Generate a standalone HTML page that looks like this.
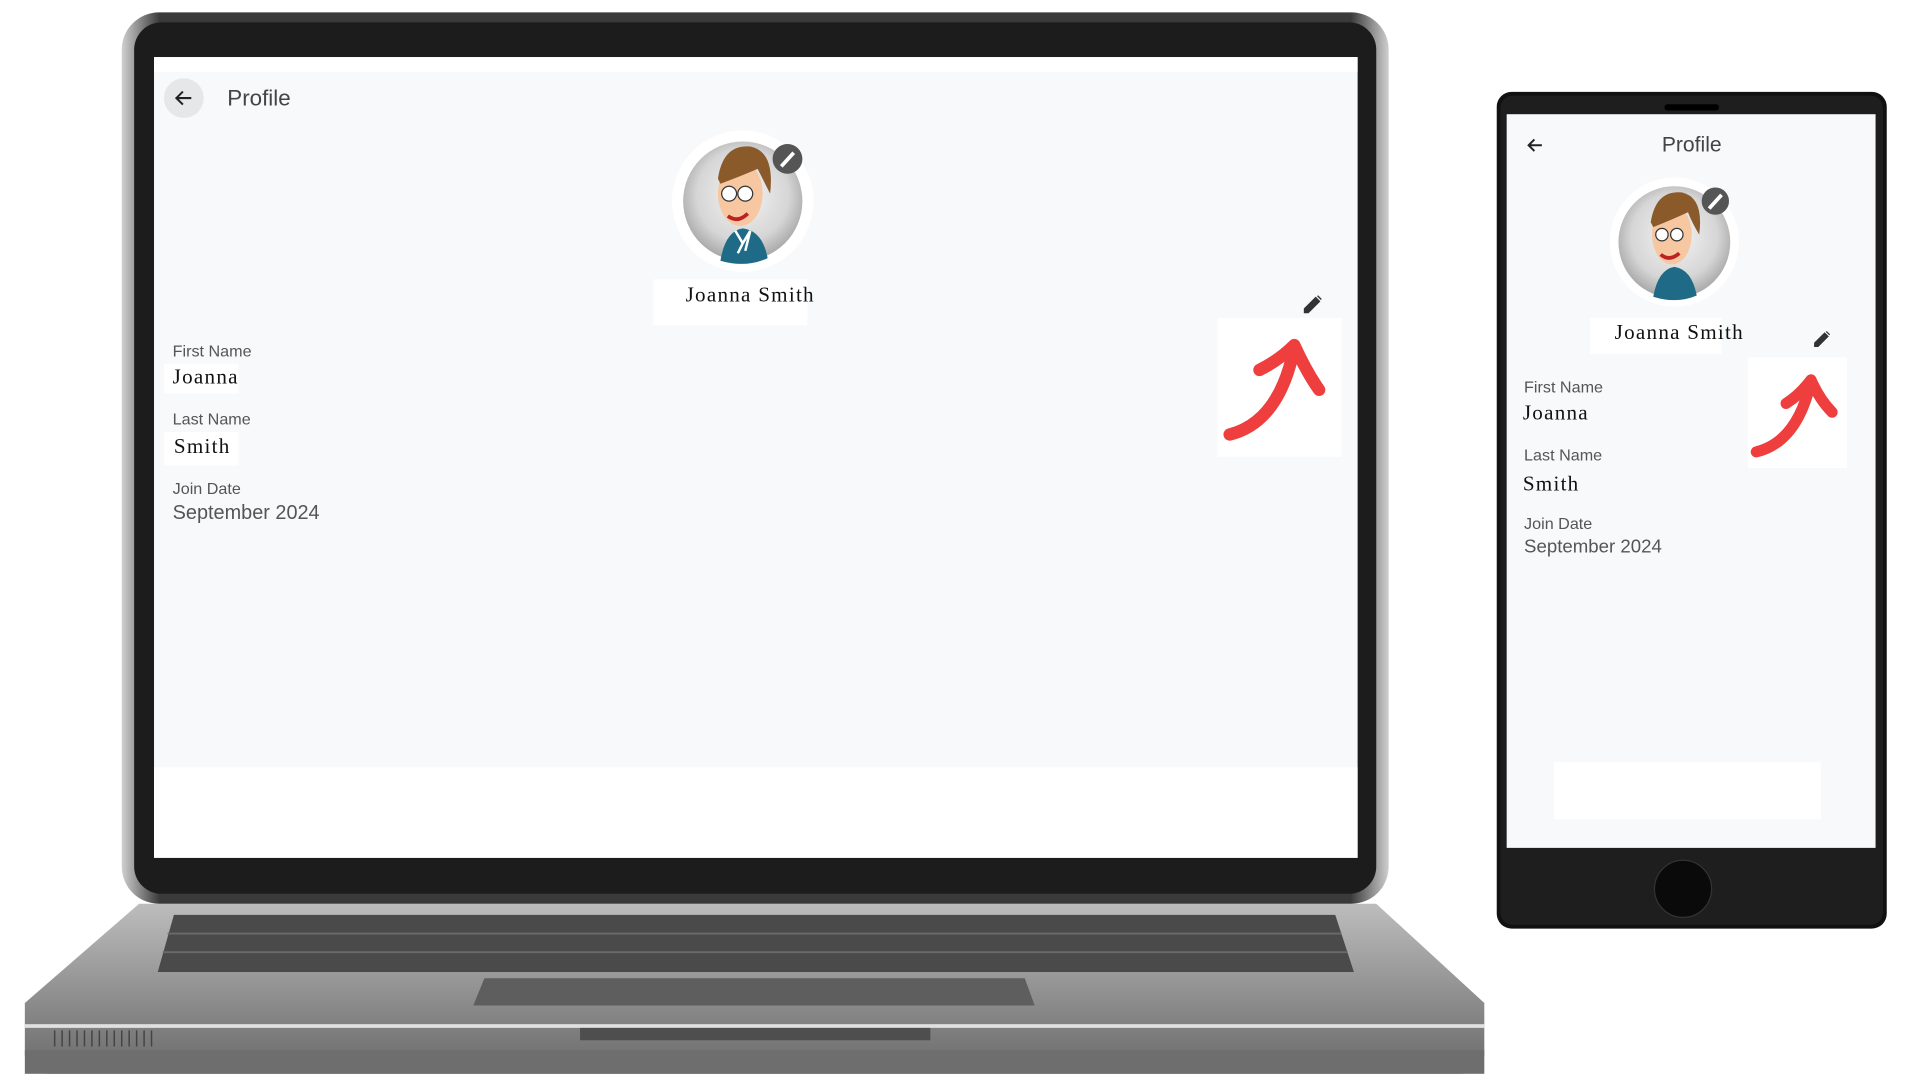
<!DOCTYPE html>
<html><head><meta charset="utf-8"><style>
html,body{margin:0;padding:0;background:#fff;overflow:hidden}
body{width:1919px;height:1080px;position:relative}
#w{position:absolute;left:0;top:0;width:1545px;height:870px;transform:scale(1.2421,1.2414);transform-origin:0 0}
.a{position:absolute}
.sans{font-family:"Liberation Sans",sans-serif}
.ser{font-family:"Liberation Serif",serif;color:#111}
.lbl{font-family:"Liberation Sans",sans-serif;font-size:13px;color:#555}
</style></head><body><div id="w">
<!-- laptop base -->
<svg class="a" style="left:0;top:0" width="1545" height="870">
<defs>
<linearGradient id="bg" x1="0" y1="0" x2="0" y2="1"><stop offset="0" stop-color="#bdbdbd"/><stop offset=".6" stop-color="#8a8a8a"/><stop offset="1" stop-color="#6a6a6a"/></linearGradient>
<linearGradient id="lid" x1="0" y1="0" x2="1" y2="0"><stop offset="0" stop-color="#d0d0d0"/><stop offset=".03" stop-color="#3a3a3a"/><stop offset=".97" stop-color="#3a3a3a"/><stop offset="1" stop-color="#cfcfcf"/></linearGradient>
<radialGradient id="av" cx=".5" cy=".45" r=".55"><stop offset="0" stop-color="#f4f4f4"/><stop offset=".7" stop-color="#d6d6d6"/><stop offset="1" stop-color="#a8a8a8"/></radialGradient>
</defs>
<path d="M112 728 L1108 728 L1195 808 L1195 850 Q1190 865 1175 865 L40 865 Q22 865 20 850 L20 808 Z" fill="url(#bg)"/>
<rect x="20" y="825" width="1175" height="3" fill="#e0e0e0"/>
<rect x="20" y="846" width="1175" height="19" fill="#6e6e6e"/>
<path d="M140 737 L1075 737 L1090 783 L127 783 Z" fill="#4a4a4a"/>
<g stroke="#6a6a6a" stroke-width="1.5">
<line x1="135" y1="752" x2="1080" y2="752"/><line x1="131" y1="767" x2="1085" y2="767"/>
</g>
<path d="M390 788 L825 788 L833 810 L381 810 Z" fill="#5e5e5e"/>
<rect x="467" y="828" width="282" height="10" fill="#4e4e4e"/>
<g stroke="#444" stroke-width="1.2">
<line x1="44" y1="830" x2="44" y2="843"/><line x1="50" y1="830" x2="50" y2="843"/><line x1="56" y1="830" x2="56" y2="843"/><line x1="62" y1="830" x2="62" y2="843"/><line x1="68" y1="830" x2="68" y2="843"/><line x1="74" y1="830" x2="74" y2="843"/><line x1="80" y1="830" x2="80" y2="843"/><line x1="86" y1="830" x2="86" y2="843"/><line x1="92" y1="830" x2="92" y2="843"/><line x1="98" y1="830" x2="98" y2="843"/><line x1="104" y1="830" x2="104" y2="843"/><line x1="110" y1="830" x2="110" y2="843"/><line x1="116" y1="830" x2="116" y2="843"/><line x1="122" y1="830" x2="122" y2="843"/>
</g>
<!-- lid -->
<rect x="98" y="10" width="1020" height="718" rx="30" fill="url(#lid)"/>
<rect x="108" y="18" width="1000" height="702" rx="22" fill="#1c1c1c"/>
<!-- phone -->
<rect x="1205" y="74" width="314" height="674" rx="12" fill="#111"/>
<rect x="1208" y="77" width="308" height="668" rx="10" fill="#1e1e1e"/>
<rect x="1340" y="84" width="44" height="5" rx="2.5" fill="#000"/>
<circle cx="1355" cy="716" r="23" fill="#0a0a0a" stroke="#333" stroke-width="1"/>
</svg>

<!-- laptop screen -->
<div class="a" style="left:124px;top:46px;width:969px;height:645px;background:#f8f9fa">
 <div class="a" style="left:0;top:0;width:969px;height:12px;background:#fff"></div>
 <div class="a" style="left:0;top:572px;width:969px;height:73px;background:#fff"></div>
</div>
<div class="a" style="left:132px;top:63px;width:32px;height:32px;border-radius:50%;background:#e6e7e9"></div>
<svg class="a" style="left:139px;top:70px" width="18" height="18" viewBox="0 0 24 24"><path d="M20 12H5M11 5l-7 7 7 7" fill="none" stroke="#222" stroke-width="2.2"/></svg>
<div class="a sans" style="left:183px;top:69px;font-size:18px;color:#444">Profile</div>

<svg class="a" style="left:540px;top:104px" width="120" height="120">
<circle cx="58" cy="58" r="57" fill="#fff"/>
<circle cx="58" cy="58" r="48" fill="url(#av)"/>
<path d="M40 106 Q44 82 58 80 Q74 82 78 104 Q60 112 40 106Z" fill="#1f6a86"/>
<path d="M52 82 L58 92 L64 82 L60 98 M58 92 L54 100" stroke="#fff" stroke-width="2" fill="none"/>
<ellipse cx="56" cy="52" rx="18" ry="26" fill="#f6c7a0"/>
<path d="M38 40 Q42 12 64 14 Q84 18 80 52 Q74 40 70 32 Q56 38 40 44Z" fill="#8b5a2b"/>
<circle cx="47" cy="52" r="6" fill="#fff" stroke="#333"/><circle cx="60" cy="52" r="6" fill="#fff" stroke="#333"/>
<path d="M46 70 Q54 76 62 68" stroke="#b22" stroke-width="3" fill="none"/>
<circle cx="94" cy="24" r="12" fill="#555"/>
<path d="M89 30 L99 19" stroke="#fff" stroke-width="3"/>
</svg>
<div class="a" style="left:526px;top:225px;width:124px;height:37px;background:#fff"></div>
<div class="a ser" style="left:526px;top:228px;width:156px;text-align:center;font-size:17px;letter-spacing:1px">Joanna Smith</div>

<svg class="a" style="left:1047px;top:236px" width="20" height="18" viewBox="0 0 24 24"><path d="M3 21v-4L15 5l4 4L7 21z M17 3l4 4" fill="#333" stroke="#333" stroke-width="1.5"/></svg>
<svg class="a" style="left:980px;top:256px" width="100" height="112">
<rect width="100" height="112" fill="#fff"/>
<path d="M10 94 Q50 84 62 24 M34 42 Q50 34 62 22 Q72 44 82 58" fill="none" stroke="#ee3e3e" stroke-width="10" stroke-linecap="round" stroke-linejoin="round"/>
</svg>

<div class="a lbl" style="left:139px;top:275px">First Name</div>
<div class="a" style="left:132px;top:293px;width:60px;height:24px;background:#fff"></div>
<div class="a ser" style="left:139px;top:294px;font-size:17px;letter-spacing:1px">Joanna</div>
<div class="a lbl" style="left:139px;top:330px">Last Name</div>
<div class="a" style="left:132px;top:348px;width:60px;height:27px;background:#fff"></div>
<div class="a ser" style="left:140px;top:350px;font-size:17px;letter-spacing:1px">Smith</div>
<div class="a lbl" style="left:139px;top:386px">Join Date</div>
<div class="a sans" style="left:139px;top:405px;font-size:16px;color:#555">September 2024</div>

<!-- phone screen -->
<div class="a" style="left:1213px;top:92px;width:297px;height:591px;background:#f8f9fa"></div>
<div class="a" style="left:1251px;top:614px;width:215px;height:46px;background:#fff"></div>
<svg class="a" style="left:1228px;top:109px" width="16" height="16" viewBox="0 0 24 24"><path d="M20 12H5M11 5l-7 7 7 7" fill="none" stroke="#222" stroke-width="2.4"/></svg>
<div class="a sans" style="left:1312px;top:107px;width:100px;text-align:center;font-size:17px;color:#444">Profile</div>
<svg class="a" style="left:1294px;top:143px" width="110" height="110">
<circle cx="54" cy="52" r="52" fill="#fff"/>
<circle cx="54" cy="52" r="45" fill="url(#av)"/>
<path d="M37 96 Q41 74 54 72 Q68 74 72 95 Q56 102 37 96Z" fill="#1f6a86"/>
<ellipse cx="52" cy="46" rx="16" ry="24" fill="#f6c7a0"/>
<path d="M35 36 Q39 10 60 12 Q78 16 74 46 Q68 36 65 28 Q52 34 37 40Z" fill="#8b5a2b"/>
<circle cx="44" cy="46" r="5" fill="#fff" stroke="#333"/><circle cx="56" cy="46" r="5" fill="#fff" stroke="#333"/>
<path d="M43 62 Q50 68 58 61" stroke="#b22" stroke-width="3" fill="none"/>
<circle cx="87" cy="19" r="11" fill="#555"/>
<path d="M82 25 L92 14" stroke="#fff" stroke-width="3"/>
</svg>
<div class="a" style="left:1280px;top:256px;width:106px;height:29px;background:#fff"></div>
<div class="a ser" style="left:1280px;top:258px;width:144px;text-align:center;font-size:17px;letter-spacing:1px">Joanna Smith</div>
<svg class="a" style="left:1458px;top:265px" width="18" height="16" viewBox="0 0 24 24"><path d="M3 21v-4L15 5l4 4L7 21z M17 3l4 4" fill="#333" stroke="#333" stroke-width="1.5"/></svg>
<svg class="a" style="left:1407px;top:288px" width="80" height="89">
<rect width="80" height="89" fill="#fff"/>
<path d="M7 76 Q40 68 51 19 M31 37 Q42 30 51 18 Q58 34 68 44" fill="none" stroke="#ee3e3e" stroke-width="9" stroke-linecap="round" stroke-linejoin="round"/>
</svg>
<div class="a lbl" style="left:1227px;top:304px">First Name</div>
<div class="a ser" style="left:1226px;top:323px;font-size:17px;letter-spacing:1px">Joanna</div>
<div class="a lbl" style="left:1227px;top:359px">Last Name</div>
<div class="a ser" style="left:1226px;top:380px;font-size:17px;letter-spacing:1px">Smith</div>
<div class="a lbl" style="left:1227px;top:414px">Join Date</div>
<div class="a sans" style="left:1227px;top:432px;font-size:15px;color:#555">September 2024</div>
</div></body></html>
